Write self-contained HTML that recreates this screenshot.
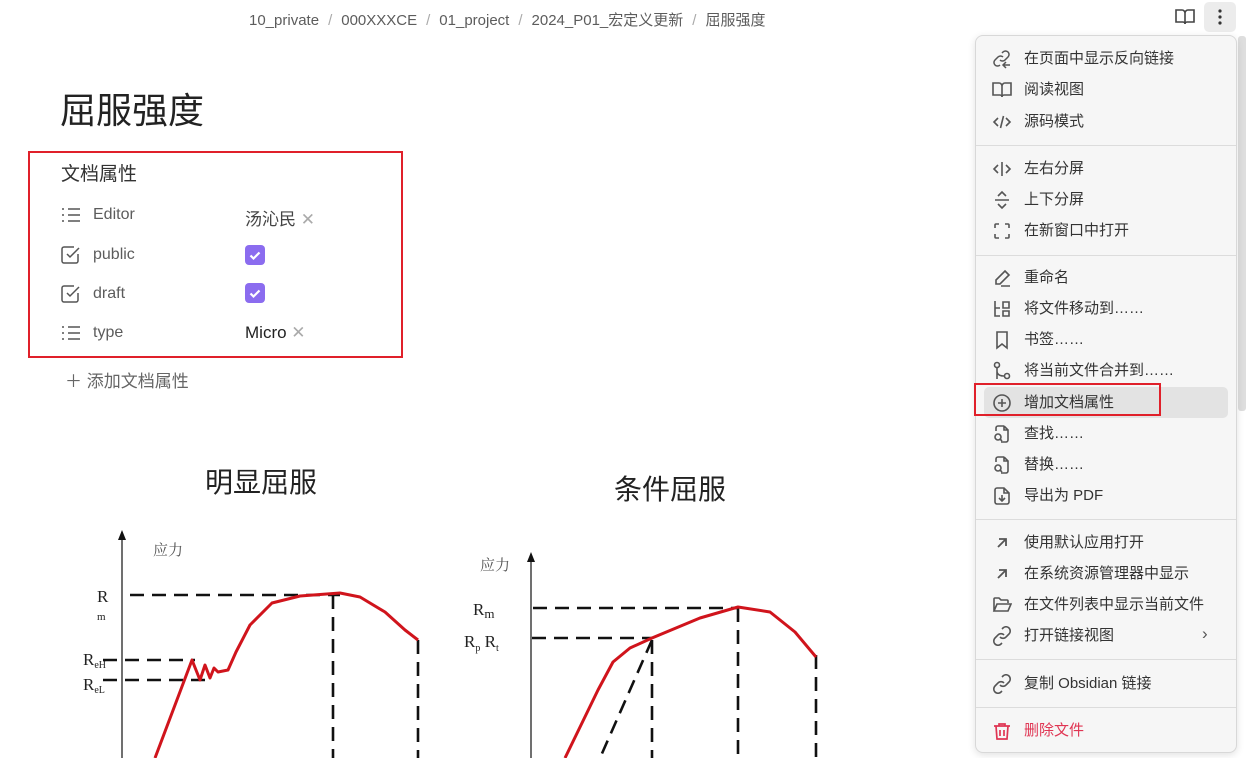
<!DOCTYPE html>
<html><head><meta charset="utf-8"><style>
*{margin:0;padding:0;box-sizing:border-box}
body{width:1246px;height:758px;overflow:hidden;background:#fff;font-family:"Liberation Sans","Noto Sans CJK SC",sans-serif;position:relative;color:#222}
.a{position:absolute;white-space:nowrap}
.crumb{top:9px;left:249px;font-size:15px;color:#5c5c5c}
.crumb span{color:#aaa;margin:0 9px}
h1{position:absolute;left:60px;top:82px;font-size:36px;font-weight:normal;color:#222}
.pl{font-size:16px;color:#5c5c5c}
.menu{position:absolute;left:975px;top:35px;width:262px;height:718px;background:#f6f6f6;border:1px solid #d8d8d8;border-radius:8px;box-shadow:0 2px 8px rgba(0,0,0,.12)}
.mi{position:absolute;left:48px;font-size:15px;color:#333;line-height:20px}
.ic{position:absolute;left:16px;width:20px;height:20px}
.sep{position:absolute;left:0;right:0;height:1px;background:#dcdcdc}
.chk{position:absolute;width:20px;height:20px;border-radius:4px;background:#8b6cef}
</style></head><body>
<div class="a crumb">10_private<span>/</span>000XXXCE<span>/</span>01_project<span>/</span>2024_P01_宏定义更新<span>/</span>屈服强度</div>
<svg class="a" style="left:1174px;top:7px" width="22" height="20" viewBox="0 0 22 20" fill="none" stroke="#444" stroke-width="1.6"><path d="M2 3h6a3 3 0 0 1 3 3v11a2 2 0 0 0-2-2H2zM20 3h-6a3 3 0 0 0-3 3v11a2 2 0 0 1 2-2h7z"/></svg>
<div class="a" style="left:1204px;top:2px;width:32px;height:30px;background:#ececec;border-radius:5px"></div>
<svg class="a" style="left:1214px;top:7px" width="12" height="20"><circle cx="6" cy="4" r="1.6" fill="#333"/><circle cx="6" cy="10" r="1.6" fill="#333"/><circle cx="6" cy="16" r="1.6" fill="#333"/></svg>
<h1>屈服强度</h1>
<div class="a" style="left:28px;top:151px;width:375px;height:207px;border:2px solid #e0202a"></div>
<div class="a" style="left:61px;top:159px;font-size:19px;color:#333">文档属性</div>
<svg class="a" style="left:61px;top:206px" width="20" height="18" stroke="#555" stroke-width="1.5"><path d="M7 3h12M7 9h12M7 15h12M1 3h2M1 9h2M1 15h2"/></svg>
<div class="a pl" style="left:93px;top:206px">Editor</div>
<div class="a" style="left:245px;top:205px;font-size:17px;color:#444">汤沁民 <span style="color:#aaa">✕</span></div>
<svg class="a" style="left:61px;top:245px" width="20" height="20" fill="none" stroke="#555" stroke-width="1.5"><path d="M17 9v7a2 2 0 0 1-2 2H3a2 2 0 0 1-2-2V4a2 2 0 0 1 2-2h10M6 9l3 3 9-9"/></svg>
<div class="a pl" style="left:93px;top:246px">public</div>
<div class="chk" style="left:245px;top:245px"></div>
<svg class="a" style="left:245px;top:245px" width="20" height="20" fill="none" stroke="#fff" stroke-width="2.2"><path d="M5.5 10.5l3 3 6-6"/></svg>
<svg class="a" style="left:61px;top:284px" width="20" height="20" fill="none" stroke="#555" stroke-width="1.5"><path d="M17 9v7a2 2 0 0 1-2 2H3a2 2 0 0 1-2-2V4a2 2 0 0 1 2-2h10M6 9l3 3 9-9"/></svg>
<div class="a pl" style="left:93px;top:285px">draft</div>
<div class="chk" style="left:245px;top:283px"></div>
<svg class="a" style="left:245px;top:283px" width="20" height="20" fill="none" stroke="#fff" stroke-width="2.2"><path d="M5.5 10.5l3 3 6-6"/></svg>
<svg class="a" style="left:61px;top:324px" width="20" height="18" stroke="#555" stroke-width="1.5"><path d="M7 3h12M7 9h12M7 15h12M1 3h2M1 9h2M1 15h2"/></svg>
<div class="a pl" style="left:93px;top:324px">type</div>
<div class="a" style="left:245px;top:323px;font-size:17px;color:#222">Micro <span style="color:#aaa">✕</span></div>
<div class="a" style="left:65px;top:367px;font-size:17px;color:#666">＋ 添加文档属性</div>

<svg class="a" style="left:0;top:440px" width="900" height="318" font-family="Liberation Serif,Noto Serif CJK SC,serif">
<text x="205" y="52" font-size="28" font-family="Noto Sans CJK SC,sans-serif" fill="#222">明显屈服</text>
<text x="614" y="59" font-size="28" font-family="Noto Sans CJK SC,sans-serif" fill="#222">条件屈服</text>
<g stroke="#111" stroke-width="1.2"><path d="M122 318V92M531 318V115"/></g>
<path d="M118 100l4-10 4 10zM527 122l4-10 4 10z" fill="#111"/>
<text x="153" y="115" font-size="15" fill="#555">应力</text>
<text x="480" y="130" font-size="15" fill="#555">应力</text>
<g stroke="#111" stroke-width="2.6" stroke-dasharray="14 8" fill="none">
<path d="M130 155H340M333 155V318M418 200V318M103 220H195M103 240H208"/>
<path d="M533 168H738M738 168V318M532 198H652M652 200V318M816 215V318M652 200L600 318"/>
</g>
<g fill="#222" font-size="17"><text x="97" y="162">R</text><text x="97" y="180" font-size="11">m</text>
<text x="83" y="225">R<tspan font-size="10" dy="3">eH</tspan></text><text x="83" y="250">R<tspan font-size="10" dy="3">eL</tspan></text>
<text x="473" y="175">R<tspan font-size="13" dy="3">m</tspan></text><text x="464" y="207">R<tspan font-size="10" dy="4">p</tspan><tspan dy="-4"> R</tspan><tspan font-size="10" dy="4">t</tspan></text></g>
<g stroke="#d0141c" stroke-width="3" fill="none" stroke-linejoin="round">
<path d="M155 318L192 220L200 240L205 225L210 238L214 228L218 232L228 230L236 212L250 185L272 163L300 156L340 153L360 157L385 172L405 190L418 200"/>
<path d="M565 318L598 250L613 222L630 208L652 198L700 178L738 167L770 172L795 192L816 217"/>
</g></svg>

<div class="a" style="left:1238px;top:36px;width:8px;height:375px;background:#dedede;border-radius:3px"></div>
<div class="menu">
<div class="a" style="left:8px;top:351px;width:244px;height:31px;background:#e3e3e3;border-radius:5px"></div>
<svg class="ic" style="top:13px" viewBox="0 0 20 20" fill="none" stroke="#555" stroke-width="1.5"><path d="M8 11a3.5 3.5 0 0 0 5 0l3-3a3.5 3.5 0 0 0-5-5l-1 1M11 8a3.5 3.5 0 0 0-5 0l-3 3a3.5 3.5 0 0 0 5 5M14 13l-3 3 3 3M11 16h7"/></svg>
<div class="mi" style="top:13px">在页面中显示反向链接</div>
<svg class="ic" style="top:44px" viewBox="0 0 20 20" fill="none" stroke="#555" stroke-width="1.6"><path d="M1 3h6a3 3 0 0 1 3 3v11a2 2 0 0 0-2-2H1zM19 3h-6a3 3 0 0 0-3 3v11a2 2 0 0 1 2-2h7z"/></svg>
<div class="mi" style="top:44px">阅读视图</div>
<svg class="ic" style="top:76px" viewBox="0 0 20 20" fill="none" stroke="#555" stroke-width="1.6"><path d="M6 6l-4 4 4 4M14 6l4 4-4 4M11.5 4l-3 12"/></svg>
<div class="mi" style="top:76px">源码模式</div>
<div class="sep" style="top:109px"></div>
<svg class="ic" style="top:123px" viewBox="0 0 20 20" fill="none" stroke="#555" stroke-width="1.6"><path d="M10 3v14M6 6l-4 4 4 4M14 6l4 4-4 4"/></svg>
<div class="mi" style="top:123px">左右分屏</div>
<svg class="ic" style="top:154px" viewBox="0 0 20 20" fill="none" stroke="#555" stroke-width="1.6"><path d="M3 10h14M6 6l4-4 4 4M6 14l4 4 4-4"/></svg>
<div class="mi" style="top:154px">上下分屏</div>
<svg class="ic" style="top:185px" viewBox="0 0 20 20" fill="none" stroke="#555" stroke-width="1.6"><path d="M3 7V4a1 1 0 0 1 1-1h3M13 3h3a1 1 0 0 1 1 1v3M17 13v3a1 1 0 0 1-1 1h-3M7 17H4a1 1 0 0 1-1-1v-3"/></svg>
<div class="mi" style="top:185px">在新窗口中打开</div>
<div class="sep" style="top:219px"></div>
<svg class="ic" style="top:232px" viewBox="0 0 20 20" fill="none" stroke="#555" stroke-width="1.6"><path d="M13 3l4 4-9 9H4v-4zM9 18h9"/></svg>
<div class="mi" style="top:232px">重命名</div>
<svg class="ic" style="top:263px" viewBox="0 0 20 20" fill="none" stroke="#555" stroke-width="1.6"><path d="M3 2v15h5M3 9h5M11 3h6v6h-6zM11 12h6v5h-6z"/></svg>
<div class="mi" style="top:263px">将文件移动到……</div>
<svg class="ic" style="top:294px" viewBox="0 0 20 20" fill="none" stroke="#555" stroke-width="1.6"><path d="M5 2h10v16l-5-4-5 4z"/></svg>
<div class="mi" style="top:294px">书签……</div>
<svg class="ic" style="top:325px" viewBox="0 0 20 20" fill="none" stroke="#555" stroke-width="1.6"><circle cx="5" cy="4" r="2.5"/><circle cx="15" cy="15" r="2.5"/><path d="M5 7v11M5 10c0 4 4 5 7 5"/></svg>
<div class="mi" style="top:325px">将当前文件合并到……</div>
<svg class="ic" style="top:357px" viewBox="0 0 20 20" fill="none" stroke="#555" stroke-width="1.6"><circle cx="10" cy="10" r="8"/><path d="M10 6v8M6 10h8"/></svg>
<div class="mi" style="top:357px">增加文档属性</div>
<svg class="ic" style="top:388px" viewBox="0 0 20 20" fill="none" stroke="#555" stroke-width="1.6"><path d="M12 2H6a2 2 0 0 0-2 2v3M12 2l4 4v10a2 2 0 0 1-2 2H9M12 2v4h4"/><circle cx="6" cy="13" r="3"/><path d="M8 15l2 2"/></svg>
<div class="mi" style="top:388px">查找……</div>
<svg class="ic" style="top:419px" viewBox="0 0 20 20" fill="none" stroke="#555" stroke-width="1.6"><path d="M12 2H6a2 2 0 0 0-2 2v3M12 2l4 4v10a2 2 0 0 1-2 2H9M12 2v4h4"/><circle cx="6" cy="13" r="3"/><path d="M8 15l2 2"/></svg>
<div class="mi" style="top:419px">替换……</div>
<svg class="ic" style="top:450px" viewBox="0 0 20 20" fill="none" stroke="#555" stroke-width="1.6"><path d="M12 2H5a2 2 0 0 0-2 2v12a2 2 0 0 0 2 2h10a2 2 0 0 0 2-2V7zM12 2v5h5M10 9v6M7 12l3 3 3-3"/></svg>
<div class="mi" style="top:450px">导出为 PDF</div>
<div class="sep" style="top:483px"></div>
<svg class="ic" style="top:497px" viewBox="0 0 20 20" fill="none" stroke="#555" stroke-width="1.8"><path d="M6 14l8-8M7 6h7v7"/></svg>
<div class="mi" style="top:497px">使用默认应用打开</div>
<svg class="ic" style="top:528px" viewBox="0 0 20 20" fill="none" stroke="#555" stroke-width="1.8"><path d="M6 14l8-8M7 6h7v7"/></svg>
<div class="mi" style="top:528px">在系统资源管理器中显示</div>
<svg class="ic" style="top:559px" viewBox="0 0 20 20" fill="none" stroke="#555" stroke-width="1.6"><path d="M2 16V4a1 1 0 0 1 1-1h4l2 2h6a1 1 0 0 1 1 1v2M2 16l3-7h14l-3 7z"/></svg>
<div class="mi" style="top:559px">在文件列表中显示当前文件</div>
<svg class="ic" style="top:590px" viewBox="0 0 20 20" fill="none" stroke="#555" stroke-width="1.6"><path d="M8 11a4 4 0 0 0 6 0l3-3a4 4 0 0 0-6-6l-1 1M12 9a4 4 0 0 0-6 0l-3 3a4 4 0 0 0 6 6l1-1"/></svg>
<div class="mi" style="top:590px">打开链接视图</div>
<div class="a" style="left:226px;top:588px;font-size:17px;color:#555">›</div>
<div class="sep" style="top:623px"></div>
<svg class="ic" style="top:638px" viewBox="0 0 20 20" fill="none" stroke="#555" stroke-width="1.6"><path d="M8 11a4 4 0 0 0 6 0l3-3a4 4 0 0 0-6-6l-1 1M12 9a4 4 0 0 0-6 0l-3 3a4 4 0 0 0 6 6l1-1"/></svg>
<div class="mi" style="top:638px">复制 Obsidian 链接</div>
<div class="sep" style="top:671px"></div>
<svg class="ic" style="top:685px" viewBox="0 0 20 20" fill="none" stroke="#e03553" stroke-width="1.7"><path d="M2 5h16M7 5V3h6v2M4 5l1 13h10l1-13M8 9v6M12 9v6"/></svg>
<div class="mi" style="top:685px;color:#e03553">删除文件</div>
</div>
<div class="a" style="left:974px;top:383px;width:187px;height:33px;border:2px solid #e0202a"></div>
</body></html>
